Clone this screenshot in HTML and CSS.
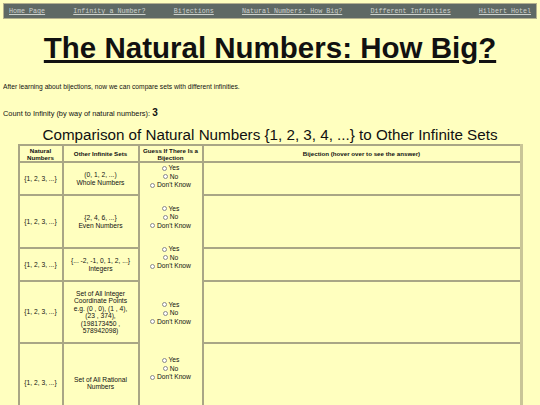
FILE: index.html
```html
<!DOCTYPE html>
<html lang="en">
<head>
  <meta charset="UTF-8" />
  <title>The Natural Numbers: How Big?</title>
  <link rel="stylesheet" href="styles.css">
</head>
<body>
  <nav class="topnav">
    <a href="#">Home Page</a>
    <a href="#">Infinity a Number?</a>
    <a href="#">Bijections</a>
    <a href="#">Natural Numbers: How Big?</a>
    <a href="#">Different Infinities</a>
    <a href="#">Hilbert Hotel</a>
  </nav>

  <h1>The Natural Numbers: How Big?</h1>

  <p class="intro">After learning about bijections, now we can compare sets with different infinities.</p>
  <p class="counter">Count to Infinity (by way of natural numbers): <span id="count">3</span></p>

  <h2>Comparison of Natural Numbers {1, 2, 3, 4, ...} to Other Infinite Sets</h2>

  <table class="compare">
    <colgroup>
      <col class="c-nat">
      <col class="c-set">
      <col class="c-guess">
      <col class="c-bij">
    </colgroup>
    <tr class="head">
      <th>Natural<br>Numbers</th>
      <th>Other Infinite Sets</th>
      <th>Guess If There Is a<br>Bijection</th>
      <th>Bijection (hover over to see the answer)</th>
    </tr>
    <tr class="r1">
      <td>{1, 2, 3, ...}</td>
      <td>(0, 1, 2, ...)<br>Whole Numbers</td>
      <td class="guess" rowspan="5">
        <div class="choice">
          <label><input type="radio" name="g1"> Yes</label>
          <label><input type="radio" name="g1"> No</label>
          <label><input type="radio" name="g1"> Don't Know</label>
        </div>
        <div class="choice">
          <label><input type="radio" name="g2"> Yes</label>
          <label><input type="radio" name="g2"> No</label>
          <label><input type="radio" name="g2"> Don't Know</label>
        </div>
        <div class="choice">
          <label><input type="radio" name="g3"> Yes</label>
          <label><input type="radio" name="g3"> No</label>
          <label><input type="radio" name="g3"> Don't Know</label>
        </div>
        <div class="choice wide">
          <label><input type="radio" name="g4"> Yes</label>
          <label><input type="radio" name="g4"> No</label>
          <label><input type="radio" name="g4"> Don't Know</label>
        </div>
        <div class="choice wide">
          <label><input type="radio" name="g5"> Yes</label>
          <label><input type="radio" name="g5"> No</label>
          <label><input type="radio" name="g5"> Don't Know</label>
        </div>
      </td>
      <td class="answer"></td>
    </tr>
    <tr class="r2">
      <td>{1, 2, 3, ...}</td>
      <td>{2, 4, 6, ...}<br>Even Numbers</td>
      <td class="answer"></td>
    </tr>
    <tr class="r3">
      <td>{1, 2, 3, ...}</td>
      <td>{... -2, -1, 0, 1, 2, ...}<br>Integers</td>
      <td class="answer"></td>
    </tr>
    <tr class="r4">
      <td>{1, 2, 3, ...}</td>
      <td>Set of All Integer<br>Coordinate Points<br>e.g. (0 , 0), (1 , 4),<br>(23 , 374),<br>(198173450 ,<br>578942098)</td>
      <td class="answer"></td>
    </tr>
    <tr class="r5">
      <td>{1, 2, 3, ...}</td>
      <td>Set of All Rational<br>Numbers</td>
      <td class="answer"></td>
    </tr>
  </table>
</body>
</html>
```

FILE: styles.css
```css
:root {
  --page-bg: #ffffbf;
  --nav-bg: #5f6965;
  --nav-link: #cdd1cd;
  --rule: #a9a685;
  --text: #111111;
}

body {
  margin: 3px;
  background: var(--page-bg);
  color: var(--text);
  font-family: "Liberation Sans", Arial, sans-serif;
}

/* top navigation strip */
.topnav {
  display: flex;
  justify-content: space-between;
  align-items: center;
  height: 14px;
  padding: 0 5px;
  background: var(--nav-bg);
  border: 1px solid #b3b08e;
}

.topnav a {
  font-family: "Liberation Mono", "Courier New", monospace;
  font-size: 6.7px;
  color: var(--nav-link);
}

h1 {
  margin: 12px 0 0;
  font-size: 29.5px;
  line-height: 34px;
  text-align: center;
  text-decoration: underline;
  text-decoration-thickness: 3px;
}

.intro {
  margin: 18px 0 0;
  font-size: 6.7px;
  line-height: 8px;
}

.counter {
  margin: 17px 0 0;
  font-size: 7.4px;
  line-height: 10px;
}

#count {
  font-size: 10px;
  font-weight: 900;
}

h2 {
  margin: 7px 0 0;
  font-size: 15.2px;
  font-weight: normal;
  line-height: 17px;
  text-align: center;
}

/* comparison table */
.compare {
  width: 505px;
  margin: 1px auto 0;
  border-collapse: collapse;
  table-layout: fixed;
  border-right: 3px solid #c9c597;
}

.c-nat { width: 44px; }
.c-set { width: 76px; }
.c-guess { width: 64px; }

.compare th,
.compare td {
  border: 2px solid var(--rule);
  padding: 0 1px;
  text-align: center;
  vertical-align: middle;
  font-size: 6.7px;
  line-height: 7.5px;
}

.compare th {
  font-size: 6.2px;
  line-height: 7px;
}

.head { height: 17px; }
.r1 { height: 33px; }
.r2 { height: 53px; }
.r3 { height: 33px; }
.r4 { height: 62px; }
.r5 { height: 80px; }

.compare td.guess {
  vertical-align: top;
  padding-top: 1px;
}

.choice label {
  display: block;
  line-height: 8.6px;
}

.choice + .choice { margin-top: 14.8px; }
.choice + .choice.wide { margin-top: 29.7px; }

.choice input {
  appearance: none;
  width: 5px;
  height: 5px;
  margin: 0;
  border: 0.8px solid #8a8a8a;
  border-radius: 50%;
  background: #fff;
  vertical-align: -0.5px;
}
```
